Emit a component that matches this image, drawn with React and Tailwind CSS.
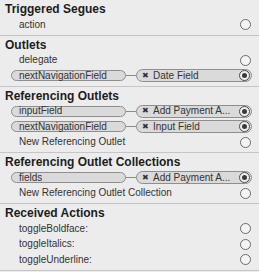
import React from "react";

const Empty = () => (
  <span className="w-[11px] h-[11px] rounded-full border border-[#6b6b6b] bg-[#f4f4f4] shrink-0" />
);

const Filled = () => (
  <span className="w-[11px] h-[11px] rounded-full border-[1.5px] border-[#4a4a4a] bg-[#f0f0f0] shrink-0 flex items-center justify-center">
    <span className="w-[5px] h-[5px] rounded-full bg-[#3a3a3a]" />
  </span>
);

const Header = ({ children }) => (
  <div className="h-[16px] flex items-center pl-[5px] text-[12px] font-bold text-[#1c1c1c] leading-none">
    {children}
  </div>
);

const Plain = ({ children }) => (
  <div className="h-[15.5px] flex items-center justify-between pl-[19px] pr-[8px]">
    <span className="text-[10px] text-[#333333] leading-none">{children}</span>
    <Empty />
  </div>
);

const Conn = ({ left, right }) => (
  <div className="h-[15.5px] flex items-center pl-[11px] pr-[7px]">
    <div className="w-[115px] h-[11px] rounded-full border border-[#8e8e8e] bg-[#dadada] flex items-center pl-[7px] shrink-0">
      <span className="text-[10px] text-[#333333] leading-none truncate">{left}</span>
    </div>
    <div className="w-[10px] h-px bg-[#8a8a8a] shrink-0" />
    <div className="flex-1 h-[13px] rounded-full border border-[#8e8e8e] bg-[#dadada] flex items-center pl-[5px] pr-px min-w-0">
      <span className="text-[8px] text-[#333333] leading-none mr-[4px]">✖</span>
      <span className="flex-1 text-[10px] text-[#333333] leading-none whitespace-nowrap overflow-hidden">{right}</span>
      <Filled />
    </div>
  </div>
);

const Section = ({ children }) => (
  <div className="pt-px pb-[2px] border-b border-[#c6c6c6]">{children}</div>
);

export default function App() {
  return (
    <div
      className="w-[259px] h-[272px] bg-[#ececec] overflow-hidden"
      style={{ fontFamily: '"Liberation Sans", Arial, sans-serif' }}
    >
      <Section>
        <Header>Triggered Segues</Header>
        <Plain>action</Plain>
      </Section>
      <Section>
        <Header>Outlets</Header>
        <Plain>delegate</Plain>
        <Conn left="nextNavigationField" right="Date Field" />
      </Section>
      <Section>
        <Header>Referencing Outlets</Header>
        <Conn left="inputField" right="Add Payment A..." />
        <Conn left="nextNavigationField" right="Input Field" />
        <Plain>New Referencing Outlet</Plain>
      </Section>
      <Section>
        <Header>Referencing Outlet Collections</Header>
        <Conn left="fields" right="Add Payment A..." />
        <Plain>New Referencing Outlet Collection</Plain>
      </Section>
      <Section>
        <Header>Received Actions</Header>
        <Plain>toggleBoldface:</Plain>
        <Plain>toggleItalics:</Plain>
        <Plain>toggleUnderline:</Plain>
      </Section>
    </div>
  );
}
